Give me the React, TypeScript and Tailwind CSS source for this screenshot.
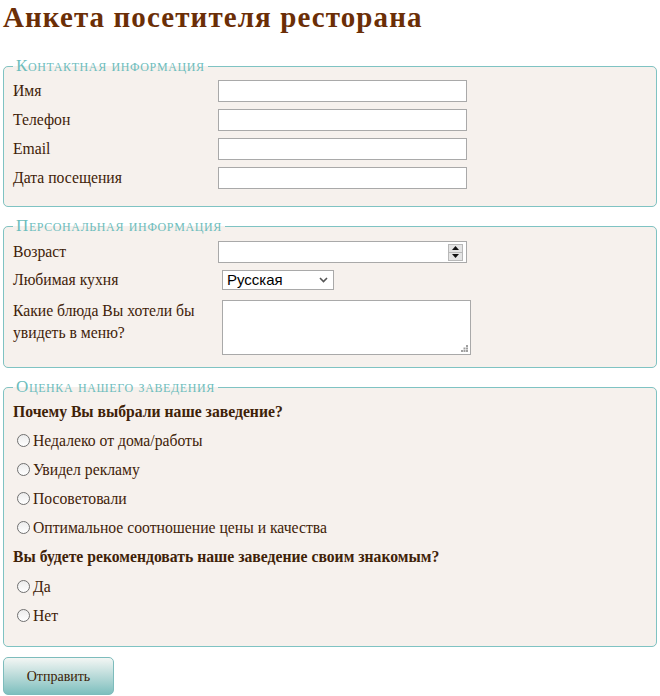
import type { ReactNode } from "react";

const LABEL = "w-[205px] shrink-0 text-[15.7px] leading-[22px] text-[#3f2208]";
const INPUT =
  "h-[22px] w-[249px] border border-[#a9a9a9] bg-white px-1 text-[14px] outline-none";

function Section({ legend, children, className = "" }: { legend: string; children: ReactNode; className?: string }) {
  return (
    <fieldset
      className={`rounded-[5px] border border-[#7fc3c3] bg-[#f6f1ed] pl-[9px] pr-2 ${className}`}
    >
      <legend className="px-[3px] text-[17px] leading-[18px] tracking-[0.6px] text-[#6dbdbd] [font-variant:small-caps]">
        {legend}
      </legend>
      {children}
    </fieldset>
  );
}

function Row({ label, children }: { label: ReactNode; children: ReactNode }) {
  return (
    <div className="flex h-[29px] items-center">
      <span className={LABEL}>{label}</span>
      {children}
    </div>
  );
}

function Radio({ label }: { label: string }) {
  return (
    <label className="flex h-[29px] items-center pl-[4px] text-[15.7px] text-[#3f2208]">
      <span className="size-[13px] shrink-0 rounded-full border border-[#707070] bg-gradient-to-b from-[#ececec] to-white" />
      <span className="ml-[3px]">{label}</span>
    </label>
  );
}

function Question({ children }: { children: ReactNode }) {
  return (
    <div className="flex h-[29px] items-center text-[15.7px] font-bold text-[#3f2208]">
      {children}
    </div>
  );
}

function NumberField() {
  return (
    <div className="flex h-[22px] w-[249px] items-center justify-end border border-[#a9a9a9] bg-white pr-[3px]">
      <div className="flex h-[17px] w-[15px] flex-col border border-[#b8b8b8] bg-[#e4e4e4]">
        <div className="flex flex-1 items-center justify-center border-b border-[#b8b8b8]">
          <svg width="7" height="4" viewBox="0 0 7 4">
            <path d="M0 4 L3.5 0 L7 4 Z" fill="#111" />
          </svg>
        </div>
        <div className="flex flex-1 items-center justify-center">
          <svg width="7" height="4" viewBox="0 0 7 4">
            <path d="M0 0 L7 0 L3.5 4 Z" fill="#111" />
          </svg>
        </div>
      </div>
    </div>
  );
}

function SelectField() {
  return (
    <div className="ml-[4px] flex h-[20px] w-[112px] items-center justify-between border border-[#a9a9a9] bg-white pl-[4px] pr-[5px] font-['Liberation_Sans',Arial,sans-serif] text-[15px] text-black">
      <span>Русская</span>
      <svg width="9" height="6" viewBox="0 0 9 6">
        <path d="M1 1 L4.5 4.5 L8 1" fill="none" stroke="#555" strokeWidth="1.6" />
      </svg>
    </div>
  );
}

function TextArea() {
  return (
    <div className="relative ml-[4px] h-[55px] w-[249px]">
      <textarea className="size-full resize-none border border-[#a9a9a9] bg-white outline-none" />
      <svg className="absolute bottom-[3px] right-[3px]" width="7" height="7" viewBox="0 0 7 7">
        <g fill="#a0a0a0">
          <rect x="5" y="0" width="2" height="2" />
          <rect x="2.5" y="2.5" width="2" height="2" />
          <rect x="5" y="2.5" width="2" height="2" />
          <rect x="0" y="5" width="2" height="2" />
          <rect x="2.5" y="5" width="2" height="2" />
          <rect x="5" y="5" width="2" height="2" />
        </g>
      </svg>
    </div>
  );
}

export default function App() {
  return (
    <div className="min-h-screen bg-white px-[3px] font-['Liberation_Serif','Times_New_Roman',serif]">
      <h1 className="text-[29px] font-bold leading-[34px] tracking-[1.1px] text-[#6b2e06]">
        Анкета посетителя ресторана
      </h1>

      <Section legend="Контактная информация" className="mt-[23px] pb-[14px] pt-[1px]">
        <Row label="Имя">
          <input className={INPUT} type="text" />
        </Row>
        <Row label="Телефон">
          <input className={INPUT} type="text" />
        </Row>
        <Row label="Email">
          <input className={INPUT} type="text" />
        </Row>
        <Row label="Дата посещения">
          <input className={INPUT} type="text" />
        </Row>
      </Section>

      <Section legend="Персональная информация" className="mt-[10px] pb-[12px] pt-[6px]">
        <div className="flex h-[22px] items-center">
          <span className={LABEL}>Возраст</span>
          <NumberField />
        </div>
        <div className="mt-[7px] flex h-[20px] items-center">
          <span className={LABEL}>Любимая кухня</span>
          <SelectField />
        </div>
        <div className="mt-[10px] flex items-start">
          <span className={LABEL}>
            Какие блюда Вы хотели бы
            <br />
            увидеть в меню?
          </span>
          <TextArea />
        </div>
      </Section>

      <Section legend="Оценка нашего заведения" className="mt-[10px] pb-[16px] pt-[1px]">
        <Question>Почему Вы выбрали наше заведение?</Question>
        <Radio label="Недалеко от дома/работы" />
        <Radio label="Увидел рекламу" />
        <Radio label="Посоветовали" />
        <Radio label="Оптимальное соотношение цены и качества" />
        <Question>Вы будете рекомендовать наше заведение своим знакомым?</Question>
        <div className="pt-[1px]">
          <Radio label="Да" />
          <Radio label="Нет" />
        </div>
      </Section>

      <button
        className="mt-[10px] h-[38px] w-[111px] rounded-[5px] border border-[#7dbcbc] bg-gradient-to-b from-[#f3f6f4] to-[#7dbfbe] text-[14px] text-[#3b1d06]"
        type="button"
      >
        Отправить
      </button>
    </div>
  );
}
